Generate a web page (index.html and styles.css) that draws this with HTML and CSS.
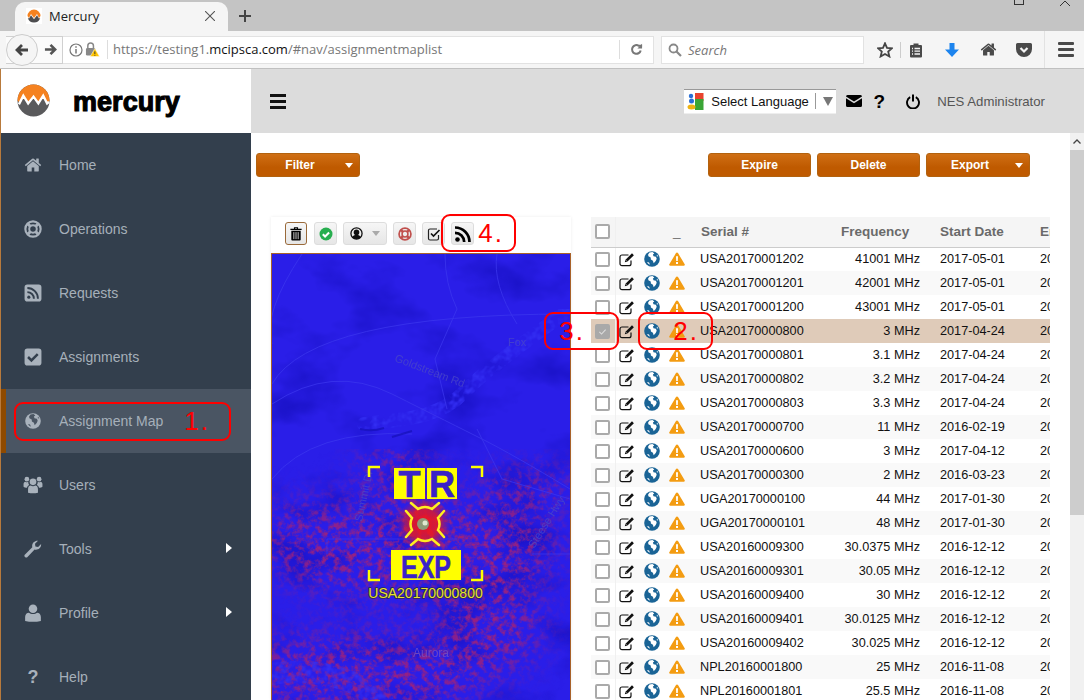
FILE: index.html
```html
<!DOCTYPE html>
<html lang="en">
<head>
<meta charset="utf-8">
<title>Mercury</title>
<link rel="stylesheet" href="styles.css">
</head>
<body>
<svg class="defs" width="0" height="0" aria-hidden="true">
  <defs>
    <symbol id="i-home" viewBox="0 0 1792 1792"><path fill="currentColor" d="M1472 992v480q0 26-19 45t-45 19h-384v-384h-256v384h-384q-26 0-45-19t-19-45v-480q0-1 .5-3t.5-3l575-474 575 474q1 2 1 6zm223-69l-62 74q-8 9-21 11h-3q-13 0-21-7l-692-577-692 577q-12 8-24 7-13-2-21-11l-62-74q-8-10-7-23.5t11-21.500l719-599q32-26 76-26t76 26l244 204v-195q0-14 9-23t23-9h192q14 0 23 9t9 23v408l219 182q10 8 11 21.500t-7 23.500z"/></symbol>
    <symbol id="i-ring" viewBox="0 0 20 20"><circle cx="10" cy="10" r="8.500" fill="none" stroke="currentColor" stroke-width="2.400"/><circle cx="10" cy="10" r="4.200" fill="none" stroke="currentColor" stroke-width="2.200"/><g stroke="currentColor" stroke-width="3.400"><path d="M4.500 4.500l3 3M15.500 4.500l-3 3M4.500 15.500l3-3M15.500 15.500l-3-3"/></g></symbol>
    <symbol id="i-rsssq" viewBox="0 0 16 16"><rect x="0.500" y="0.500" width="15" height="15" rx="2.500" fill="currentColor"/><g fill="none" stroke="#333f4d" stroke-width="1.700"><path d="M3 7.200a5.800 5.800 0 0 1 5.800 5.800M3 3.600a9.400 9.400 0 0 1 9.400 9.400"/></g><circle cx="4.300" cy="11.700" r="1.400" fill="#333f4d"/></symbol>
    <symbol id="i-checksq" viewBox="0 0 16 16"><rect x="0.500" y="0.500" width="15" height="15" rx="2.500" fill="currentColor"/><path d="M3.600 8l3 3 5.600-5.600" fill="none" stroke="#333f4d" stroke-width="2.200"/></symbol>
    <symbol id="i-globe" viewBox="0 0 16 16"><circle cx="8" cy="8" r="7.800" fill="currentColor"/><path d="M5.500 1.400l3-.3 1.800 1.500-1.400 1 .6 1.700 2.400.4.800 2-1 2.200-2 2.300-.8-2.500-2-1.200-.2-2-2.300-1.300-.3-1.800z" fill="var(--land,#fff)"/><path d="M3 11l2 .6 1 2.200-2-1.200zM13 3.400l1.300 2.200-1.600-.4z" fill="var(--land,#fff)"/></symbol>
    <symbol id="i-users" viewBox="0 0 22 20"><g fill="currentColor"><circle cx="11" cy="6.500" r="3.700"/><path d="M5.500 18.500v-4c0-2.700 1.500-3.900 3-3.900 1.300 1 3.700 1 5 0 1.500 0 3 1.200 3 3.900v4q-5.500 1.500-11 0z"/><circle cx="4.200" cy="3.500" r="2.600"/><circle cx="17.800" cy="3.500" r="2.600"/><path d="M.500 12V9c0-1.700 1-2.700 2-2.700 1 .7 2.400.7 3.300.2-.3 1.500.3 2.700 1 3.500-1.500.8-2.300 1.700-2.500 3Q2 13.200.500 12zM21.500 12V9c0-1.700-1-2.700-2-2.700-1 .7-2.400.7-3.300.2.300 1.500-.3 2.700-1 3.500 1.500.8 2.300 1.700 2.500 3Q20 13.200 21.500 12z"/></g></symbol>
    <symbol id="i-wrench" viewBox="0 0 18 18"><path d="M1 14.500L8.300 7.200C7.500 4 10 .600 14 .800l-3 3 .4 2.700 2.700.5 3-2.900c.3 4-3.200 6.400-6.500 5.500L3.500 17a1.700 1.700 0 0 1-2.500-2.500z" fill="currentColor"/></symbol>
    <symbol id="i-user" viewBox="0 0 16 16"><circle cx="8" cy="4.300" r="3.800" fill="currentColor"/><path d="M1 15v-3.500c0-2.500 1.600-3.800 3.300-3.800 2 1.500 5.400 1.500 7.400 0 1.700 0 3.300 1.300 3.300 3.800V15q-7 1.500-14 0z" fill="currentColor"/></symbol>
    <symbol id="i-edit" viewBox="0 0 17 15"><path d="M12 8.500v3.200a2 2 0 0 1-2 2H3a2 2 0 0 1-2-2V5a2 2 0 0 1 2-2h6.500" fill="none" stroke="currentColor" stroke-width="1.200"/><path d="M5.800 10.300l.7-2.600L13 1.300l1.900 1.900-6.400 6.400z" fill="currentColor"/><path d="M7 8.300l1 1" stroke="#fff" stroke-width=".7"/></symbol>
    <symbol id="i-warn" viewBox="0 0 16 14"><path d="M8 .500a1.200 1.200 0 0 1 1 .6l6.700 11.200a1 1 0 0 1-.9 1.500H1.200a1 1 0 0 1-.9-1.500L7 1.100A1.200 1.200 0 0 1 8 .500z" fill="currentColor"/><path d="M7 4.300h2l-.2 4.700H7.200zM7 10h2v2H7z" fill="var(--mark,#fff)"/></symbol>
    <symbol id="i-trash" viewBox="0 0 14 16"><path d="M1 3h12v1.300H1zM4.800 3V1.200h4.400V3h-1.200V2.300H6V3z" fill="currentColor"/><path d="M2 5h10v9.500a1 1 0 0 1-1 1H3a1 1 0 0 1-1-1z" fill="currentColor"/><path d="M4.700 6.500v7.500M7 6.500v7.500M9.300 6.500v7.500" stroke="#f0f0f0" stroke-width=".9"/></symbol>
    <symbol id="i-rss" viewBox="0 0 16 16"><circle cx="2.500" cy="13.500" r="2.300" fill="currentColor"/><path d="M0 6.800a9.200 9.200 0 0 1 9.200 9.200M0 1.500A14.500 14.500 0 0 1 14.500 16" fill="none" stroke="currentColor" stroke-width="2.700"/></symbol>
  </defs>
</svg>

<div class="browser">
  <div class="tabstrip">
    <div class="tab">
      <svg class="favicon" viewBox="0 0 16 16"><rect width="16" height="16" fill="#fff"/><path d="M1.500 8A6.500 6.500 0 0 1 14.500 8l-1.500 2-2-4-3 4-3-4-2 4z" fill="#f5821f"/><path d="M1.800 10l1.300.6L5 7.300l3 4 3-4 1.900 3.300 1.300-.6A6.500 6.500 0 0 1 1.800 10z" fill="#4d4d4f"/></svg>
      <span class="tab-title">Mercury</span>
      <svg class="tab-close" viewBox="0 0 10 10"><path d="M0 0l10 10M10 0L0 10" stroke="#555" stroke-width="1.100"/></svg>
    </div>
    <svg class="tab-new" viewBox="0 0 12 12"><path d="M6 0v12M0 6h12" stroke="#444" stroke-width="2"/></svg>
    <div class="winbtns">
      <span class="win-max"></span>
      <svg class="win-close" viewBox="0 0 10 6"><path d="M0 6l5-5 5 5" fill="none" stroke="#333" stroke-width="1"/></svg>
    </div>
  </div>
  <div class="navrow">
    <div class="backfwd">
      <span class="backbtn"><svg viewBox="0 0 14 14"><path d="M13 7H3M7 2L2 7l5 5" fill="none" stroke="#444" stroke-width="2.800"/></svg></span>
      <svg class="fwd" viewBox="0 0 14 14"><path d="M1 7h10M7 2l5 5-5 5" fill="none" stroke="#555" stroke-width="2.800"/></svg>
    </div>
    <div class="urlbar">
      <svg class="url-info" viewBox="0 0 14 14"><circle cx="7" cy="7" r="6" fill="none" stroke="#777" stroke-width="1.200"/><path d="M7 3.200v1.500M7 6v4.500" stroke="#777" stroke-width="1.500"/></svg>
      <svg class="url-lock" viewBox="0 0 16 16"><path d="M3 7V4a3 3 0 0 1 6 0v3" fill="none" stroke="#888" stroke-width="1.600"/><rect x="1" y="6.500" width="10" height="8" rx="1.500" fill="#888"/><path d="M10.500 7l5 8.500H5.500z" fill="#ffc400" stroke="#fff" stroke-width=".5"/><path d="M10.500 10v3M10.500 14v.8" stroke="#333" stroke-width="1"/></svg>
      <span class="url-text">https://testing1.<b>mcipsca.com</b>/#nav/assignmentmaplist</span>
      <span class="url-reload"><svg viewBox="0 0 14 14"><path d="M11.500 8A4.700 4.700 0 1 1 9.500 3L8 3h5" fill="none" stroke="#777" stroke-width="2.200"/><path d="M13 .800v5H8z" fill="#777"/></svg></span>
    </div>
    <div class="searchbar">
      <svg viewBox="0 0 14 14"><circle cx="5.500" cy="5.500" r="4" fill="none" stroke="#888" stroke-width="1.800"/><path d="M8.500 8.500l4.500 4.500" stroke="#888" stroke-width="2.200"/></svg>
      <span>Search</span>
    </div>
    <div class="toolicons">
      <svg class="t-star" viewBox="0 0 16 16"><path d="M8 1.300l2 4.600 5 .4-3.800 3.300 1.200 4.900L8 12l-4.400 2.500 1.200-4.900L1 6.300l5-.4z" fill="none" stroke="#444" stroke-width="1.800"/></svg>
      <span class="t-div"></span>
      <svg class="t-list" viewBox="0 0 14 16"><path d="M1 4a1 1 0 0 1 1-1h2.500V1.500h5V3H12a1 1 0 0 1 1 1v10.500a1 1 0 0 1-1 1H2a1 1 0 0 1-1-1z" fill="#4a4a4a"/><path d="M3 6.500h1M5.500 6.500H11M3 9.200h1M5.500 9.200H11M3 12h1M5.500 12H11" stroke="#f5f5f5" stroke-width="1.300"/></svg>
      <svg class="t-down" viewBox="0 0 14 14"><path d="M4.500 0h5v6.500H14L7 14 0 6.500h4.500z" fill="#1c84ee"/></svg>
      <svg class="t-home"><use href="#i-home"/></svg>
      <svg class="t-pocket" viewBox="0 0 16 14"><path d="M1.500 0h13A1.500 1.500 0 0 1 16 1.500V6A8 8 0 0 1 0 6V1.500A1.500 1.500 0 0 1 1.500 0z" fill="#4a4a4a"/><path d="M4.500 5L8 8.500 11.500 5" fill="none" stroke="#f5f5f5" stroke-width="2.200"/></svg>
      <span class="t-div2"></span>
      <span class="t-menu"><i></i><i></i><i></i></span>
    </div>
  </div>
</div>

<div class="app">
  <aside class="sidebar">
    <div class="brand">
      <svg class="brand-logo" viewBox="0 0 34 34"><circle cx="17" cy="17" r="16.500" fill="#5a5a5c"/><path d="M.5 17A16.500 16.500 0 0 1 33.500 17l-2 3-4-8-5 8-5-7-5 7-5-8-4 8z" fill="#f58220"/><path d="M2 21l4.500-9 5 8 5.500-7 5 7 5-8 4 8 2-1.500" fill="none" stroke="#fff" stroke-width="2.400"/></svg>
      <span class="brand-name">mercury</span>
    </div>
    <nav class="menu">
      <a class="menu-item"><svg class="mi" ><use href="#i-home"/></svg><span>Home</span></a>
      <a class="menu-item"><svg class="mi"><use href="#i-ring"/></svg><span>Operations</span></a>
      <a class="menu-item"><svg class="mi"><use href="#i-rsssq"/></svg><span>Requests</span></a>
      <a class="menu-item"><svg class="mi"><use href="#i-checksq"/></svg><span>Assignments</span></a>
      <a class="menu-item active"><svg class="mi mi-globe"><use href="#i-globe"/></svg><span>Assignment Map</span></a>
      <a class="menu-item"><svg class="mi"><use href="#i-users"/></svg><span>Users</span></a>
      <a class="menu-item has-sub"><svg class="mi"><use href="#i-wrench"/></svg><span>Tools</span></a>
      <a class="menu-item has-sub"><svg class="mi"><use href="#i-user"/></svg><span>Profile</span></a>
      <a class="menu-item"><b class="mi mi-q">?</b><span>Help</span></a>
    </nav>
  </aside>

  <div class="page">
    <header class="topbar">
      <span class="burger"><i></i><i></i><i></i></span>
      <div class="topbar-right">
        <div class="lang">
          <svg class="lang-logo" viewBox="0 0 17 17"><rect x="8" y="0" width="8.500" height="8" fill="#e8432e"/><rect x="8" y="6" width="8.500" height="11" fill="#3aa535"/><circle cx="4" cy="3" r="2.200" fill="#2a6fd6"/><circle cx="4.500" cy="8" r="2.500" fill="#2a6fd6"/><ellipse cx="4.500" cy="14" rx="4" ry="2.500" fill="#eeb211"/></svg>
          <span class="lang-text">Select Language</span>
          <span class="lang-sep"></span>
          <span class="lang-arrow"></span>
        </div>
        <svg class="h-mail" viewBox="0 0 16 12"><path d="M1.500 0h13A1.500 1.500 0 0 1 16 1.500L8 6.500 0 1.500A1.500 1.500 0 0 1 1.500 0zM0 3.300L8 8.300l8-5V10.500A1.500 1.500 0 0 1 14.500 12h-13A1.500 1.500 0 0 1 0 10.500z"/></svg>
        <b class="h-q">?</b>
        <svg class="h-power" viewBox="0 0 14 15"><path d="M4.200 3.200a6 6 0 1 0 5.600 0" fill="none" stroke="#000" stroke-width="1.900"/><path d="M7 .500v7" stroke="#000" stroke-width="2"/></svg>
        <span class="h-user">NES Administrator</span>
      </div>
    </header>

    <div class="body-wrap">
      <main class="content">
        <div class="actions">
          <button class="btn btn-split"><span>Filter</span><i class="caret"></i></button>
          <div class="actions-right">
            <button class="btn">Expire</button>
            <button class="btn">Delete</button>
            <button class="btn btn-split"><span>Export</span><i class="caret"></i></button>
          </div>
        </div>
        <div class="panels">
          <section class="map-panel">
            <div class="map-tools">
              <span class="tb tb-active"><svg class="ic-14"><use href="#i-trash"/></svg></span>
              <span class="tb"><svg class="tb-ok" viewBox="0 0 14 14"><circle cx="7" cy="7" r="6.500" fill="#27ae4f"/><path d="M3.800 7.200l2.300 2.300 4-4" fill="none" stroke="#fff" stroke-width="2"/></svg></span>
              <span class="tb tb-wide"><svg class="tb-person" viewBox="0 0 14 14"><circle cx="7" cy="7" r="6" fill="none" stroke="#111" stroke-width="1.400"/><circle cx="7" cy="5.800" r="3" fill="#111"/><path d="M2.500 11c2-3.400 7-3.400 9 0a6 6 0 0 1-9 0z" fill="#111"/></svg><i class="tb-caret"></i></span>
              <span class="tb"><svg class="ic-14 tb-ring"><use href="#i-ring"/></svg></span>
              <span class="tb"><svg class="tb-chk" viewBox="0 0 14 14"><path d="M11.500 8v3.500a1.500 1.500 0 0 1-1.500 1.500H3a1.500 1.500 0 0 1-1.500-1.500V3.500A1.500 1.500 0 0 1 3 2h7" fill="none" stroke="#222" stroke-width="1.200"/><path d="M4 6.500l2.500 2.500 6-6" fill="none" stroke="#111" stroke-width="1.700"/></svg></span>
              <span class="tb"><svg class="ic-16"><use href="#i-rss"/></svg></span>
            </div>
            <svg class="map" viewBox="0 0 298 447" preserveAspectRatio="xMinYMin slice">
              <defs>
                <filter id="speck" x="0" y="0" width="100%" height="100%" color-interpolation-filters="sRGB">
                  <feTurbulence type="fractalNoise" baseFrequency=".16" numOctaves="4" seed="7" result="n"/>
                  <feColorMatrix in="n" type="matrix" values="0 0 0 0 .60  0 0 0 0 .13  0 0 0 0 .50  3.200 0 0 0 -1.350" result="c"/>
                  <feGaussianBlur in="SourceAlpha" stdDeviation="18" result="b"/>
                  <feComposite in="c" in2="b" operator="in"/>
                </filter>
                <filter id="dark" x="0" y="0" width="100%" height="100%" color-interpolation-filters="sRGB">
                  <feTurbulence type="fractalNoise" baseFrequency=".014 .022" numOctaves="4" seed="12"/>
                  <feColorMatrix type="matrix" values="0 0 0 0 .10  0 0 0 0 .07  0 0 0 0 .78  0 2.400 0 0 -1.150"/>
                </filter>
                <filter id="light" x="0" y="0" width="100%" height="100%" color-interpolation-filters="sRGB">
                  <feTurbulence type="fractalNoise" baseFrequency=".15" numOctaves="2" seed="4" result="n"/>
                  <feColorMatrix in="n" type="matrix" values="0 0 0 0 .20  0 0 0 0 .18  0 0 0 0 .95  2.500 0 0 0 -1" result="c"/>
                  <feComposite in="c" in2="SourceAlpha" operator="in"/>
                </filter>
                <radialGradient id="glow"><stop offset="0" stop-color="#ff1010" stop-opacity=".95"/><stop offset=".55" stop-color="#f01818" stop-opacity=".75"/><stop offset="1" stop-color="#e01030" stop-opacity="0"/></radialGradient>
              </defs>
              <rect width="298" height="447" fill="#2a1ee8"/>
              <rect width="298" height="447" filter="url(#dark)"/>
              <g filter="url(#speck)">
                <ellipse cx="140" cy="295" rx="150" ry="50"/>
                <ellipse cx="45" cy="275" rx="55" ry="25"/>
                <ellipse cx="255" cy="235" rx="50" ry="18"/>
                <ellipse cx="90" cy="420" rx="130" ry="40"/>
                <ellipse cx="125" cy="215" rx="40" ry="20"/>
                <ellipse cx="220" cy="370" rx="50" ry="50"/>
              </g>
              <g filter="url(#light)" fill="none" stroke="#000" stroke-linecap="round">
                <path d="M92 170C130 165 165 165 190 140S250 90 298 55" stroke-width="14"/>
                <path d="M0 420Q60 410 110 445" stroke-width="22"/>
              </g>
              <g fill="none" stroke="#3c37ee" stroke-width="1" opacity=".75">
                <path d="M0 130Q40 60 298 60M30 0Q-10 60 0 90"/>
                <path d="M173 0q0 30 12 55l-22 50 12 50"/>
                <path d="M225 0q-5 30 20 70M0 150q60-40 120-10 60 30 90 45t88 50"/>
                <path d="M0 225q40-50 140-45M205 175l25 50 68 20"/>
                <path d="M55 300v-15h130M260 300h38"/>
              </g>
              <path d="M88 175q12 3 24-1M120 183l20-6" stroke="#1610b8" stroke-width="2" fill="none" opacity=".7"/>
              <g class="map-label">
                <text x="122" y="107" transform="rotate(21 122 107)">Goldstream Rd</text>
                <text x="236" y="92">Fox</text>
                <text x="141" y="403" class="map-aurora">Aurora</text>
                <text x="90" y="268" transform="rotate(-78 90 268)">Summit Dr</text>
                <text x="262" y="295" transform="rotate(-58 262 295)">Steese Hwy</text>
              </g>
              <circle cx="152" cy="270" r="27" fill="url(#glow)"/>
              <g fill="none" stroke="#ffff00" stroke-width="2.500">
                <path d="M97 223v-10h11M199 213h11v10M97 316v10h11M199 326h11v-10"/>
              </g>
              <g transform="translate(152 270)" fill="none" stroke="#ffee20" stroke-width="2.500" stroke-linecap="round">
                <path d="M-13-21L-6-15Q1-19 8-15L15-21M-13 21L-6 15Q1 19 8 15L15 21M-18-13L-12-6Q-15 0-12 6L-18 13M20-13L14-6Q17 0 14 6L20 13"/>
              </g>
              <circle cx="151" cy="270" r="6" fill="#8e9a78"/><circle cx="153" cy="269" r="2.500" fill="#dfe8d0"/>
              <g fill="#ffff00">
                <rect x="122" y="214" width="31" height="31"/>
                <rect x="155" y="214" width="30" height="31"/>
                <rect x="119" y="296" width="70" height="30"/>
              </g>
              <g class="map-mark">
                <text x="137.500" y="243">T</text>
                <text x="170" y="243">R</text>
                <text x="154" y="324" class="map-exp" textLength="50" lengthAdjust="spacingAndGlyphs">EXP</text>
              </g>
              <text x="153.500" y="344" class="map-serial">USA20170000800</text>
            </svg>
          </section>

          <section class="grid-panel">
            <table class="grid">
              <thead>
                <tr>
                  <th class="c-chk"><span class="cb cb-head"></span></th>
                  <th class="c-ic"></th><th class="c-ic2"></th><th class="c-ic3 c-sort">_</th>
                  <th class="c-serial">Serial #</th><th class="c-freq">Frequency</th><th class="c-date">Start Date</th><th class="c-end">End Date</th>
                </tr>
              </thead>
              <tbody>
                <tr><td class="c-chk"><span class="cb"></span></td><td class="c-ic"><svg class="g-edit"><use href="#i-edit"/></svg></td><td class="c-ic2"><svg class="g-globe"><use href="#i-globe"/></svg></td><td class="c-ic3"><svg class="g-warn"><use href="#i-warn"/></svg></td><td>USA20170001202</td><td class="c-freq">41001 MHz</td><td class="c-date">2017-05-01</td><td class="c-end">2018-05-01</td></tr>
                <tr><td class="c-chk"><span class="cb"></span></td><td class="c-ic"><svg class="g-edit"><use href="#i-edit"/></svg></td><td class="c-ic2"><svg class="g-globe"><use href="#i-globe"/></svg></td><td class="c-ic3"><svg class="g-warn"><use href="#i-warn"/></svg></td><td>USA20170001201</td><td class="c-freq">42001 MHz</td><td class="c-date">2017-05-01</td><td class="c-end">2018-05-01</td></tr>
                <tr><td class="c-chk"><span class="cb"></span></td><td class="c-ic"><svg class="g-edit"><use href="#i-edit"/></svg></td><td class="c-ic2"><svg class="g-globe"><use href="#i-globe"/></svg></td><td class="c-ic3"><svg class="g-warn"><use href="#i-warn"/></svg></td><td>USA20170001200</td><td class="c-freq">43001 MHz</td><td class="c-date">2017-05-01</td><td class="c-end">2018-05-01</td></tr>
                <tr class="selected"><td class="c-chk"><span class="cb cb-on"><svg viewBox="0 0 14 14"><path d="M3 7.500l2.800 2.800L11 4.500" fill="none" stroke="#ddd" stroke-width="1.300"/></svg></span></td><td class="c-ic"><svg class="g-edit"><use href="#i-edit"/></svg></td><td class="c-ic2"><svg class="g-globe"><use href="#i-globe"/></svg></td><td class="c-ic3"><svg class="g-warn"><use href="#i-warn"/></svg></td><td>USA20170000800</td><td class="c-freq">3 MHz</td><td class="c-date">2017-04-24</td><td class="c-end">2018-04-24</td></tr>
                <tr><td class="c-chk"><span class="cb"></span></td><td class="c-ic"><svg class="g-edit"><use href="#i-edit"/></svg></td><td class="c-ic2"><svg class="g-globe"><use href="#i-globe"/></svg></td><td class="c-ic3"><svg class="g-warn"><use href="#i-warn"/></svg></td><td>USA20170000801</td><td class="c-freq">3.1 MHz</td><td class="c-date">2017-04-24</td><td class="c-end">2018-04-24</td></tr>
                <tr><td class="c-chk"><span class="cb"></span></td><td class="c-ic"><svg class="g-edit"><use href="#i-edit"/></svg></td><td class="c-ic2"><svg class="g-globe"><use href="#i-globe"/></svg></td><td class="c-ic3"><svg class="g-warn"><use href="#i-warn"/></svg></td><td>USA20170000802</td><td class="c-freq">3.2 MHz</td><td class="c-date">2017-04-24</td><td class="c-end">2018-04-24</td></tr>
                <tr><td class="c-chk"><span class="cb"></span></td><td class="c-ic"><svg class="g-edit"><use href="#i-edit"/></svg></td><td class="c-ic2"><svg class="g-globe"><use href="#i-globe"/></svg></td><td class="c-ic3"><svg class="g-warn"><use href="#i-warn"/></svg></td><td>USA20170000803</td><td class="c-freq">3.3 MHz</td><td class="c-date">2017-04-24</td><td class="c-end">2018-04-24</td></tr>
                <tr><td class="c-chk"><span class="cb"></span></td><td class="c-ic"><svg class="g-edit"><use href="#i-edit"/></svg></td><td class="c-ic2"><svg class="g-globe"><use href="#i-globe"/></svg></td><td class="c-ic3"><svg class="g-warn"><use href="#i-warn"/></svg></td><td>USA20170000700</td><td class="c-freq">11 MHz</td><td class="c-date">2016-02-19</td><td class="c-end">2017-02-19</td></tr>
                <tr><td class="c-chk"><span class="cb"></span></td><td class="c-ic"><svg class="g-edit"><use href="#i-edit"/></svg></td><td class="c-ic2"><svg class="g-globe"><use href="#i-globe"/></svg></td><td class="c-ic3"><svg class="g-warn"><use href="#i-warn"/></svg></td><td>USA20170000600</td><td class="c-freq">3 MHz</td><td class="c-date">2017-04-12</td><td class="c-end">2018-04-12</td></tr>
                <tr><td class="c-chk"><span class="cb"></span></td><td class="c-ic"><svg class="g-edit"><use href="#i-edit"/></svg></td><td class="c-ic2"><svg class="g-globe"><use href="#i-globe"/></svg></td><td class="c-ic3"><svg class="g-warn"><use href="#i-warn"/></svg></td><td>USA20170000300</td><td class="c-freq">2 MHz</td><td class="c-date">2016-03-23</td><td class="c-end">2017-03-23</td></tr>
                <tr><td class="c-chk"><span class="cb"></span></td><td class="c-ic"><svg class="g-edit"><use href="#i-edit"/></svg></td><td class="c-ic2"><svg class="g-globe"><use href="#i-globe"/></svg></td><td class="c-ic3"><svg class="g-warn"><use href="#i-warn"/></svg></td><td>UGA20170000100</td><td class="c-freq">44 MHz</td><td class="c-date">2017-01-30</td><td class="c-end">2018-01-30</td></tr>
                <tr><td class="c-chk"><span class="cb"></span></td><td class="c-ic"><svg class="g-edit"><use href="#i-edit"/></svg></td><td class="c-ic2"><svg class="g-globe"><use href="#i-globe"/></svg></td><td class="c-ic3"><svg class="g-warn"><use href="#i-warn"/></svg></td><td>UGA20170000101</td><td class="c-freq">48 MHz</td><td class="c-date">2017-01-30</td><td class="c-end">2018-01-30</td></tr>
                <tr><td class="c-chk"><span class="cb"></span></td><td class="c-ic"><svg class="g-edit"><use href="#i-edit"/></svg></td><td class="c-ic2"><svg class="g-globe"><use href="#i-globe"/></svg></td><td class="c-ic3"><svg class="g-warn"><use href="#i-warn"/></svg></td><td>USA20160009300</td><td class="c-freq">30.0375 MHz</td><td class="c-date">2016-12-12</td><td class="c-end">2017-12-12</td></tr>
                <tr><td class="c-chk"><span class="cb"></span></td><td class="c-ic"><svg class="g-edit"><use href="#i-edit"/></svg></td><td class="c-ic2"><svg class="g-globe"><use href="#i-globe"/></svg></td><td class="c-ic3"><svg class="g-warn"><use href="#i-warn"/></svg></td><td>USA20160009301</td><td class="c-freq">30.05 MHz</td><td class="c-date">2016-12-12</td><td class="c-end">2017-12-12</td></tr>
                <tr><td class="c-chk"><span class="cb"></span></td><td class="c-ic"><svg class="g-edit"><use href="#i-edit"/></svg></td><td class="c-ic2"><svg class="g-globe"><use href="#i-globe"/></svg></td><td class="c-ic3"><svg class="g-warn"><use href="#i-warn"/></svg></td><td>USA20160009400</td><td class="c-freq">30 MHz</td><td class="c-date">2016-12-12</td><td class="c-end">2017-12-12</td></tr>
                <tr><td class="c-chk"><span class="cb"></span></td><td class="c-ic"><svg class="g-edit"><use href="#i-edit"/></svg></td><td class="c-ic2"><svg class="g-globe"><use href="#i-globe"/></svg></td><td class="c-ic3"><svg class="g-warn"><use href="#i-warn"/></svg></td><td>USA20160009401</td><td class="c-freq">30.0125 MHz</td><td class="c-date">2016-12-12</td><td class="c-end">2017-12-12</td></tr>
                <tr><td class="c-chk"><span class="cb"></span></td><td class="c-ic"><svg class="g-edit"><use href="#i-edit"/></svg></td><td class="c-ic2"><svg class="g-globe"><use href="#i-globe"/></svg></td><td class="c-ic3"><svg class="g-warn"><use href="#i-warn"/></svg></td><td>USA20160009402</td><td class="c-freq">30.025 MHz</td><td class="c-date">2016-12-12</td><td class="c-end">2017-12-12</td></tr>
                <tr><td class="c-chk"><span class="cb"></span></td><td class="c-ic"><svg class="g-edit"><use href="#i-edit"/></svg></td><td class="c-ic2"><svg class="g-globe"><use href="#i-globe"/></svg></td><td class="c-ic3"><svg class="g-warn"><use href="#i-warn"/></svg></td><td>NPL20160001800</td><td class="c-freq">25 MHz</td><td class="c-date">2016-11-08</td><td class="c-end">2017-11-08</td></tr>
                <tr><td class="c-chk"><span class="cb"></span></td><td class="c-ic"><svg class="g-edit"><use href="#i-edit"/></svg></td><td class="c-ic2"><svg class="g-globe"><use href="#i-globe"/></svg></td><td class="c-ic3"><svg class="g-warn"><use href="#i-warn"/></svg></td><td>NPL20160001801</td><td class="c-freq">25.5 MHz</td><td class="c-date">2016-11-08</td><td class="c-end">2017-11-08</td></tr>
              </tbody>
            </table>
          </section>
        </div>
      </main>
      <div class="scrollbar">
        <span class="sb-up"><svg viewBox="0 0 8 5"><path d="M.5 4.500L4 1l3.500 3.500" fill="none" stroke="#444" stroke-width="1.300"/></svg></span>
        <span class="sb-thumb"></span>
      </div>
    </div>
  </div>
</div>

<div class="note note-1"><span>1.</span></div>
<div class="note note-2"><span>2.</span></div>
<div class="note note-3"><span>3.</span></div>
<div class="note note-4"><span>4.</span></div>
</body>
</html>
```
FILE: styles.css
```css
* { box-sizing: border-box; }
html, body { margin: 0; height: 700px; overflow: hidden; }
body { position: relative; width: 1084px; font-family: "Liberation Sans", Arial, sans-serif; font-size: 14px; background: #fff; }
.defs { position: absolute; }
svg { display: block; flex: none; }

/* browser chrome */
.browser { height: 69px; border-bottom: 1px solid #c0c0c0; }
.tabstrip { height: 31px; background: #c4c4c4; display: flex; align-items: flex-end; position: relative; padding-left: 15px; }
.tab { width: 213px; height: 29px; background: #f5f5f5; border-radius: 10px 10px 0 0; display: flex; align-items: center; padding: 0 11px 2px; }
.favicon { width: 16px; height: 16px; }
.tab-title { margin-left: 7px; font: 13px "Open Sans", sans-serif; color: #222; flex: 1; }
.tab-close { width: 10px; height: 10px; margin-right: 2px; }
.tab-new { width: 12px; height: 12px; margin: 0 0 9px 11px; }
.winbtns { margin-left: auto; align-self: flex-start; display: flex; gap: 36px; padding-right: 14px; }
.win-max { width: 10px; height: 5px; border: 1px solid #333; border-top: 0; }
.win-close { width: 10px; height: 6px; }
.navrow { height: 37px; background: #f5f5f5; display: flex; align-items: center; padding-left: 6px; }
.backfwd { display: flex; align-items: center; width: 57px; height: 28px; position: relative; background: #fbfbfb; border: 1px solid #d0d0d0; border-left: 0; }
.backbtn { width: 32px; height: 32px; border-radius: 50%; border: 1px solid #ccc; background: #f5f5f5; display: flex; align-items: center; justify-content: center; margin-top: 0; }
.backbtn svg { width: 14px; height: 14px; }
.fwd { width: 13px; height: 13px; margin-left: 6px; }
.urlbar { width: 591px; height: 28px; background: #fff; border: 1px solid #e2e2e2; border-left: 0; display: flex; align-items: center; padding-left: 6px; }
.url-info { width: 14px; height: 14px; }
.url-lock { width: 15px; height: 15px; margin-left: 2px; }
.url-text { margin-left: 7px; padding-left: 5px; border-left: 1px solid #ddd; font: 13px/19px "Open Sans", sans-serif; color: #777; flex: 1; white-space: nowrap; }
.url-text b { font-weight: 400; color: #111; }
.url-reload { width: 34px; height: 19px; border-left: 1px solid #ddd; display: flex; align-items: center; justify-content: center; }
.url-reload svg { width: 13px; height: 13px; }
.searchbar { width: 203px; height: 28px; margin-left: 7px; background: #fff; border: 1px solid #e2e2e2; display: flex; align-items: center; padding-left: 6px; gap: 6px; font: italic 13px "Open Sans", sans-serif; color: #777; }
.searchbar svg { width: 14px; height: 14px; }
.toolicons { flex: 1; display: flex; align-items: center; height: 100%; position: relative; padding-left: 13px; }
.t-star { width: 16px; height: 16px; }
.t-div { width: 1px; height: 16px; background: #ccc; margin-left: 7px; }
.t-list { width: 14px; height: 16px; margin-left: 8px; }
.t-down { width: 14px; height: 14px; margin-left: 22px; }
.t-home { width: 17px; height: 17px; margin-left: 21px; color: #4a4a4a; }
.t-pocket { width: 16px; height: 14px; margin-left: 19px; }
.t-div2 { width: 1px; height: 37px; background: #e2e2e2; margin-left: 12px; }
.t-menu { display: flex; flex-direction: column; gap: 3px; margin-left: 13px; }
.t-menu i { display: block; width: 16px; height: 3px; border-radius: 1px; background: #4a4a4a; }

/* app */
.app { display: flex; height: 631px; border-left: 1px solid #b87a3c; }
.sidebar { width: 250px; background: #333f4d; flex: none; }
.brand { height: 64px; background: #fff; display: flex; align-items: center; padding-left: 16px; }
.brand-logo { width: 33px; height: 33px; margin-top: -2px; }
.brand-name { margin: 2px 0 0 23px; font-size: 27px; font-weight: 700; color: #000; -webkit-text-stroke: 1.100px #000; letter-spacing: .05px; }
.menu-item { height: 64px; display: flex; align-items: center; color: #a6b0ba; font-size: 14px; padding-left: 22px; position: relative; }
.menu-item .mi { width: 20px; height: 18px; color: #a9b2bc; margin-right: 16px; }
.menu-item.active { background: #4a5563; border-left: 5px solid #8f4a00; padding-left: 17px; --land: #4a5563; }
.menu-item .mi-globe { width: 20px; height: 16px; }
.mi-q { font-size: 18px; line-height: 18px; text-align: center; }
.has-sub::after { content: ""; position: absolute; left: 225px; top: 26px; border: 5.500px solid transparent; border-left: 6px solid #fff; border-right: 0; }
.page { flex: 1; min-width: 0; display: flex; flex-direction: column; }
.topbar { height: 64px; background: #dcdcdc; display: flex; align-items: center; padding: 0 39px 0 19px; }
.burger { display: flex; flex-direction: column; gap: 3px; }
.burger i { display: block; width: 16px; height: 3px; background: #111; }
.topbar-right { margin-left: auto; display: flex; align-items: center; }
.lang { width: 152px; height: 25px; background: #fff; border-top: 1px solid #999; border-bottom: 1px solid #eee; display: flex; align-items: center; padding-left: 3px; }
.lang-logo { width: 17px; height: 17px; }
.lang-text { margin-left: 7px; font-size: 13px; color: #111; white-space: nowrap; }
.lang-sep { width: 1px; height: 16px; background: #999; margin-left: 6px; }
.lang-arrow { margin-left: 7px; border: 5px solid transparent; border-top: 9px solid #777; border-bottom: 0; }
.h-mail { width: 16px; height: 12px; margin-left: 10px; fill: #000; }
.h-q { width: 14px; margin-left: 10px; font-size: 19px; line-height: 19px; text-align: center; color: #000; }
.h-power { width: 14px; height: 15px; margin-left: 20px; }
.h-user { margin-left: 17px; font-size: 13.200px; color: #555; white-space: nowrap; }
.body-wrap { flex: 1; min-height: 0; display: flex; }
.content { width: 819px; flex: none; padding: 20px 0 0 5px; overflow: hidden; }
.scrollbar { flex: 1; background: #f1f1f1; display: flex; flex-direction: column; }
.sb-up { height: 17px; display: flex; align-items: center; justify-content: center; }
.sb-up svg { width: 8px; height: 5px; }
.sb-thumb { height: 365px; background: #cdcdcd; }
.actions { display: flex; justify-content: space-between; width: 774px; }
.actions-right { display: flex; gap: 6px; }
.btn { width: 103px; height: 24px; border: 1px solid #b2620f; border-radius: 3px; background: linear-gradient(#cf6f15, #bf5a00 60%); color: #fff; font: 700 12px "Liberation Sans", sans-serif; padding: 0; display: flex; align-items: center; justify-content: center; position: relative; }
.btn-split { width: 104px; }
.btn-split span { margin-right: 16px; }
.caret { position: absolute; top: 9px; right: 6px; border: 4px solid transparent; border-top: 5px solid #fff; border-bottom: 0; }
.panels { display: flex; margin-top: 40px; align-items: flex-start; }
.map-panel { margin-left: 15px; width: 300px; flex: none; box-shadow: 0 0 3px rgba(0,0,0,.08); }
.map-tools { height: 36px; display: flex; gap: 6px; align-items: center; padding: 0 0 3px 14px; }
.tb { width: 23px; height: 23px; background: linear-gradient(#f6f6f6, #e6e6e6); border: 1px solid #ddd; border-radius: 3px; display: flex; align-items: center; justify-content: center; color: #000; }
.tb-active { border-color: #9a6a3a; width: 22px; margin-right: 1px; }
.tb-wide { width: 44px; gap: 9px; }
.ic-14 { width: 14px; height: 15px; }
.ic-16 { width: 16px; height: 16px; }
.tb-ok { width: 14px; height: 14px; }
.tb-person { width: 13px; height: 13px; }
.tb-caret { border: 4.500px solid transparent; border-top: 5px solid #aaa; border-bottom: 0; }
.tb-ring { color: #c0504d; width: 14px; height: 14px; }
.tb-chk { width: 14px; height: 14px; }
.map { width: 300px; height: 447px; border: 1px solid #a8622a; border-bottom: 0; }
.map-label text { font: 11px "Liberation Sans", sans-serif; fill: #4a47c8; opacity: .8; }
.map-label .map-aurora { font-size: 12px; fill: #7a4fc0; }
.map-mark text { font: 700 36px "Liberation Sans", sans-serif; fill: #3a22c8; text-anchor: middle; stroke: #3a22c8; stroke-width: .6px; }
.map-mark .map-exp { font-size: 31px; }
.map-serial { font: 400 14px "Liberation Sans", sans-serif; fill: #e8e030; text-anchor: middle; paint-order: stroke; stroke: #2a2a50; stroke-width: 1.500px; }

.grid-panel { margin-left: 20px; width: 459px; flex: none; overflow: hidden; }
.grid { border-collapse: collapse; table-layout: fixed; width: 549px; font-size: 12.700px; color: #111; }
.grid th { height: 30px; background: #f5f5f5; border-bottom: 1px solid #ccc; font-size: 13.500px; font-weight: 700; color: #6a6a6a; text-align: left; padding: 0; white-space: nowrap; }
.grid td { height: 24px; padding: 0; white-space: nowrap; }
.grid tbody tr:nth-child(even) td { background: #f9f9f9; }
.grid tbody tr.selected td { background: #dfcbb9; }
.c-chk { width: 24px; border-right: 1px solid #f0f0f0; }
.c-ic { width: 25px; }
.c-ic2 { width: 25px; }
.c-ic3 { width: 35px; }
.c-serial { width: 120px; }
.grid th.c-serial { padding-left: 1px; }
.grid td.c-freq { width: 100px; text-align: right; }
.grid th.c-freq { width: 100px; padding-left: 21px; }
.grid .c-date { width: 100px; padding-left: 20px; }
.grid .c-end { width: 120px; padding-left: 20px; }
.grid th.c-sort { font-weight: 400; padding-left: 8px; vertical-align: middle; }
.cb { display: block; width: 15px; height: 15px; margin-left: 4px; border: 2px solid #aaa; border-radius: 2px; background: #fff; }
.cb-on { background: #a9a9a9; border-color: #a9a9a9; }
.cb-on svg { width: 11px; height: 11px; }
.g-edit { width: 17px; height: 15px; margin-left: 3px; color: #111; }
.g-globe { width: 16px; height: 16px; color: #1a6496; margin-left: 4px; }
.g-warn { width: 16px; height: 14px; color: #f39c12; margin-left: 4px; }

/* screenshot annotations */
.note { position: absolute; border: 2px solid #f00; border-radius: 9px; display: flex; align-items: center; justify-content: flex-end; color: #f00; font: 26px "Liberation Sans", sans-serif; letter-spacing: 2px; }
.note-1 { left: 14px; top: 402px; width: 217px; height: 39px; padding-right: 19px; }
.note-2 { left: 638px; top: 312px; width: 75px; height: 38px; padding-right: 12px; }
.note-3 { left: 544px; top: 312px; width: 75px; height: 38px; padding-right: 32px; }
.note-4 { left: 441px; top: 214px; width: 75px; height: 38px; padding-right: 10px; }
```
